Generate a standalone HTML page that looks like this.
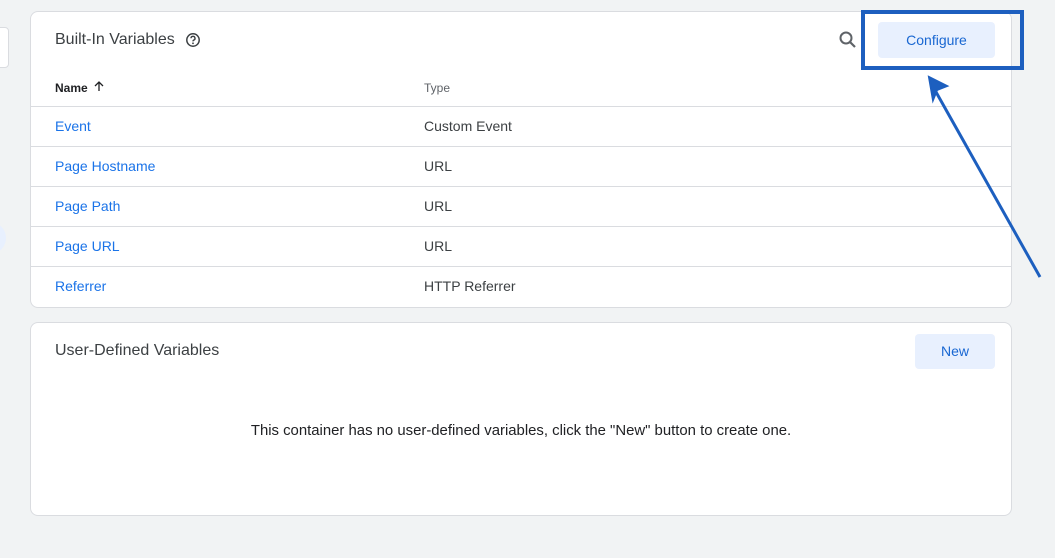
<!DOCTYPE html>
<html><head><style>
body{margin:0;width:1055px;height:558px;background:#f1f3f4;font-family:"Liberation Sans",sans-serif;position:relative;overflow:hidden}
.card{position:absolute;left:30px;width:980px;background:#fff;border:1px solid #dadce0;border-radius:8px}
.t{position:absolute;font-size:16px;color:#3c4043}
.row{position:absolute;left:0;right:0;height:40px;border-top:1px solid #dadce0;font-size:14px}
.row span{position:absolute;top:11px}
.l{left:24px;color:#1a73e8}.ty{left:393px;color:#3c4043}
.btn{position:absolute;background:#e8f0fe;color:#1967d2;border-radius:4px;font-size:14px;text-align:center}
</style></head><body>
<div style="position:absolute;left:-8px;top:27px;width:15px;height:39px;background:#fff;border:1px solid #dadce0;border-radius:4px"></div>
<div style="position:absolute;left:-26px;top:222px;width:32px;height:32px;background:#e8f0fe;border-radius:50%"></div>
<div class="card" style="top:11px;height:295px">
 <div class="t" style="left:24px;top:19px">Built-In Variables</div>
 <svg style="position:absolute;left:154px;top:20px" width="16" height="16" viewBox="0 0 16 16"><circle cx="8" cy="8" r="6.2" fill="none" stroke="#3c4043" stroke-width="1.5"/><path d="M6 6.3a2 2 0 1 1 2.6 1.9c-.5.2-.6.6-.6 1.2" fill="none" stroke="#3c4043" stroke-width="1.4"/><circle cx="8" cy="11.3" r=".9" fill="#3c4043"/></svg>
 <svg style="position:absolute;left:807px;top:18px" width="20" height="20" viewBox="0 0 20 20"><circle cx="8" cy="8" r="5.5" fill="none" stroke="#5f6368" stroke-width="2"/><path d="M12 12l5 5" stroke="#5f6368" stroke-width="2.2"/></svg>
 <div class="btn" style="left:847px;top:10px;width:117px;height:36px;line-height:36px">Configure</div>
 <div style="position:absolute;left:24px;top:69px;font-size:12px;color:#202124;font-weight:bold">Name</div>
 <svg style="position:absolute;left:62px;top:68px" width="12" height="12" viewBox="0 0 12 12"><path d="M6 11V2M2 6l4-4 4 4" fill="none" stroke="#202124" stroke-width="1.3"/></svg>
 <div style="position:absolute;left:393px;top:69px;font-size:12px;color:#5f6368">Type</div>
 <div class="row" style="top:94px"><span class="l">Event</span><span class="ty">Custom Event</span></div>
 <div class="row" style="top:134px"><span class="l">Page Hostname</span><span class="ty">URL</span></div>
 <div class="row" style="top:174px"><span class="l">Page Path</span><span class="ty">URL</span></div>
 <div class="row" style="top:214px"><span class="l">Page URL</span><span class="ty">URL</span></div>
 <div class="row" style="top:254px"><span class="l">Referrer</span><span class="ty">HTTP Referrer</span></div>
</div>
<div class="card" style="top:322px;height:192px">
 <div class="t" style="left:24px;top:19px">User-Defined Variables</div>
 <div class="btn" style="left:884px;top:11px;width:80px;height:35px;line-height:35px">New</div>
 <div style="position:absolute;left:0;right:0;top:100px;text-align:center;font-size:14.9px;color:#202124">This container has no user-defined variables, click the "New" button to create one.</div>
</div>
<div style="position:absolute;left:861px;top:10px;width:155px;height:52px;border:4px solid #1d5fbf;box-sizing:content-box"></div>
<svg style="position:absolute;left:0;top:0" width="1055" height="558"><path d="M1040 277L936 92" stroke="#1d5fbf" stroke-width="3"/><path d="M929 77l18 9-10 4-4 10z" fill="#1d5fbf" stroke="#1d5fbf" stroke-width="2"/></svg>
</body></html>
